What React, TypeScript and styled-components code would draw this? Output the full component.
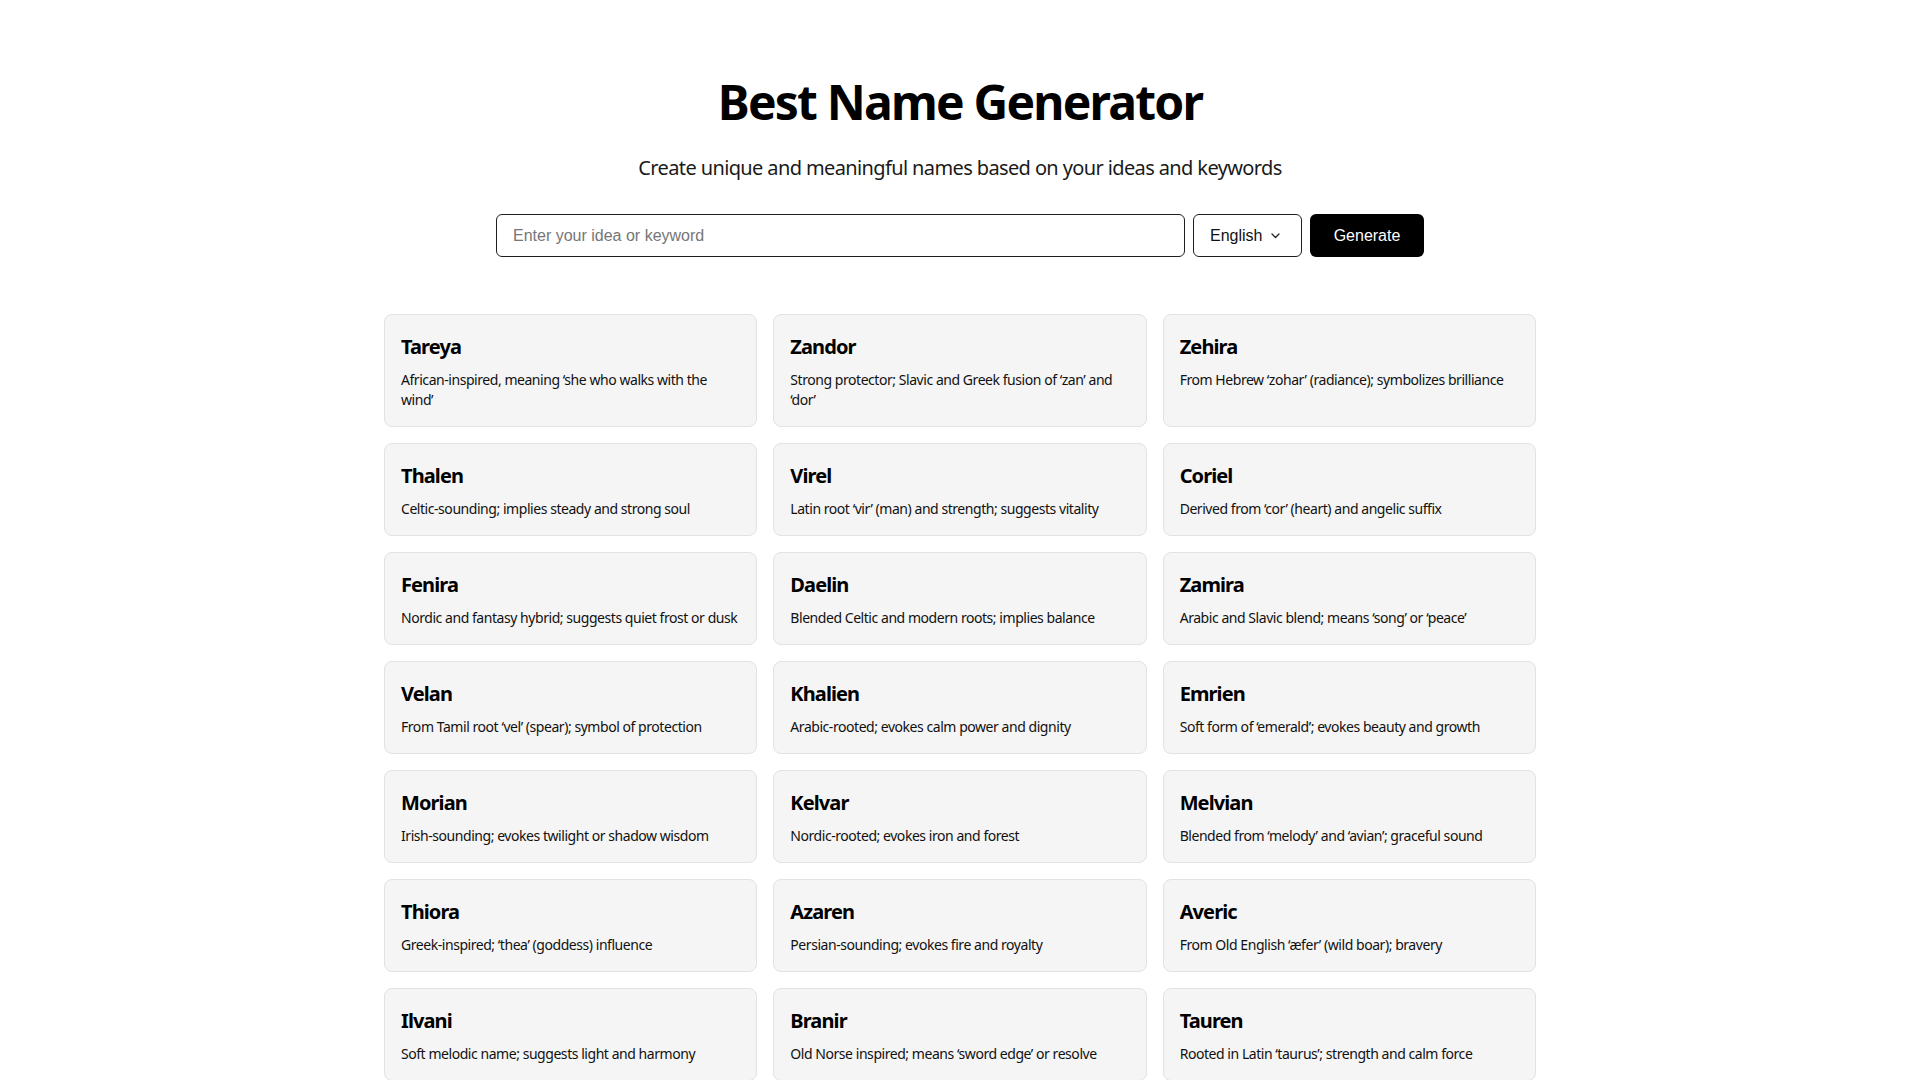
import React from "react";
import styled, { createGlobalStyle } from "styled-components";

const GlobalStyle = createGlobalStyle`
  html, body {
    margin: 0;
    padding: 0;
    background: #ffffff;
  }
  body {
    font-family: "Noto Sans", "Open Sans", sans-serif;
    color: #000000;
  }
  * { box-sizing: border-box; }
`;

const Page = styled.main`
  max-width: 1152px;
  margin: 0 auto;
  padding: 78px 0 40px;
`;

const Header = styled.header`
  text-align: center;
`;

const Title = styled.h1`
  margin: 0;
  font-size: 48px;
  line-height: 48px;
  font-weight: 700;
  letter-spacing: -1.8px;
`;

const Subtitle = styled.p`
  margin: 28px 0 0;
  font-size: 20px;
  line-height: 28px;
  color: #1a1a1a;
  letter-spacing: -0.62px;
`;

const Form = styled.form`
  display: flex;
  gap: 8px;
  width: 928px;
  margin: 32px auto 57px;
`;

const KeywordInput = styled.input`
  flex: 1;
  height: 43px;
  padding: 0 16px;
  border: 1px solid #1f1f1f;
  border-radius: 6px;
  font-family: "Liberation Sans", Arial, sans-serif;
  font-size: 16px;
  color: #111;
  outline: none;
  &::placeholder {
    color: #767676;
  }
`;

const LangSelect = styled.button`
  display: flex;
  align-items: center;
  gap: 9px;
  width: 109px;
  height: 43px;
  padding: 0 16px;
  background: #ffffff;
  border: 1px solid #1f1f1f;
  border-radius: 6px;
  font-family: "Liberation Sans", Arial, sans-serif;
  font-size: 16px;
  color: #111;
  cursor: pointer;
`;

const GenerateButton = styled.button`
  width: 114px;
  height: 43px;
  background: #000000;
  color: #ffffff;
  border: none;
  border-radius: 6px;
  font-family: "Liberation Sans", Arial, sans-serif;
  font-size: 16px;
  cursor: pointer;
`;

const Grid = styled.section`
  display: grid;
  grid-template-columns: repeat(3, 1fr);
  gap: 16px;
`;

const Card = styled.article`
  background: #f5f5f5;
  border: 1px solid #e2e2e2;
  border-radius: 8px;
  padding: 18px 16px 16px;
`;

const Name = styled.h2`
  margin: 0 0 9px;
  font-size: 20px;
  line-height: 28px;
  font-weight: 700;
  letter-spacing: -0.9px;
`;

const Meaning = styled.p`
  margin: 0;
  font-size: 14px;
  line-height: 20px;
  color: #111111;
  letter-spacing: -0.45px;
`;

const names: [string, string][] = [
  ["Tareya", "African-inspired, meaning \u2018she who walks with the wind\u2019"],
  ["Zandor", "Strong protector; Slavic and Greek fusion of \u2018zan\u2019 and \u2018dor\u2019"],
  ["Zehira", "From Hebrew \u2018zohar\u2019 (radiance); symbolizes brilliance"],
  ["Thalen", "Celtic-sounding; implies steady and strong soul"],
  ["Virel", "Latin root \u2018vir\u2019 (man) and strength; suggests vitality"],
  ["Coriel", "Derived from \u2018cor\u2019 (heart) and angelic suffix"],
  ["Fenira", "Nordic and fantasy hybrid; suggests quiet frost or dusk"],
  ["Daelin", "Blended Celtic and modern roots; implies balance"],
  ["Zamira", "Arabic and Slavic blend; means \u2018song\u2019 or \u2018peace\u2019"],
  ["Velan", "From Tamil root \u2018vel\u2019 (spear); symbol of protection"],
  ["Khalien", "Arabic-rooted; evokes calm power and dignity"],
  ["Emrien", "Soft form of \u2018emerald\u2019; evokes beauty and growth"],
  ["Morian", "Irish-sounding; evokes twilight or shadow wisdom"],
  ["Kelvar", "Nordic-rooted; evokes iron and forest"],
  ["Melvian", "Blended from \u2018melody\u2019 and \u2018avian\u2019; graceful sound"],
  ["Thiora", "Greek-inspired; \u2018thea\u2019 (goddess) influence"],
  ["Azaren", "Persian-sounding; evokes fire and royalty"],
  ["Averic", "From Old English \u2018\u00e6fer\u2019 (wild boar); bravery"],
  ["Ilvani", "Soft melodic name; suggests light and harmony"],
  ["Branir", "Old Norse inspired; means \u2018sword edge\u2019 or resolve"],
  ["Tauren", "Rooted in Latin \u2018taurus\u2019; strength and calm force"],
];

const Chevron = () => (
  <svg width="9" height="6" viewBox="0 0 9 6" fill="none">
    <path d="M1 1l3.5 3.5L8 1" stroke="#222" strokeWidth="1.3" strokeLinecap="round" strokeLinejoin="round" />
  </svg>
);

export default function App() {
  return (
    <>
      <GlobalStyle />
      <Page>
        <Header>
          <Title>Best Name Generator</Title>
          <Subtitle>Create unique and meaningful names based on your ideas and keywords</Subtitle>
        </Header>
        <Form onSubmit={(e) => e.preventDefault()}>
          <KeywordInput type="text" placeholder="Enter your idea or keyword" />
          <LangSelect type="button">
            <span>English</span>
            <Chevron />
          </LangSelect>
          <GenerateButton type="submit">Generate</GenerateButton>
        </Form>
        <Grid>
          {names.map(([name, meaning]) => (
            <Card key={name}>
              <Name>{name}</Name>
              <Meaning>{meaning}</Meaning>
            </Card>
          ))}
        </Grid>
      </Page>
    </>
  );
}
